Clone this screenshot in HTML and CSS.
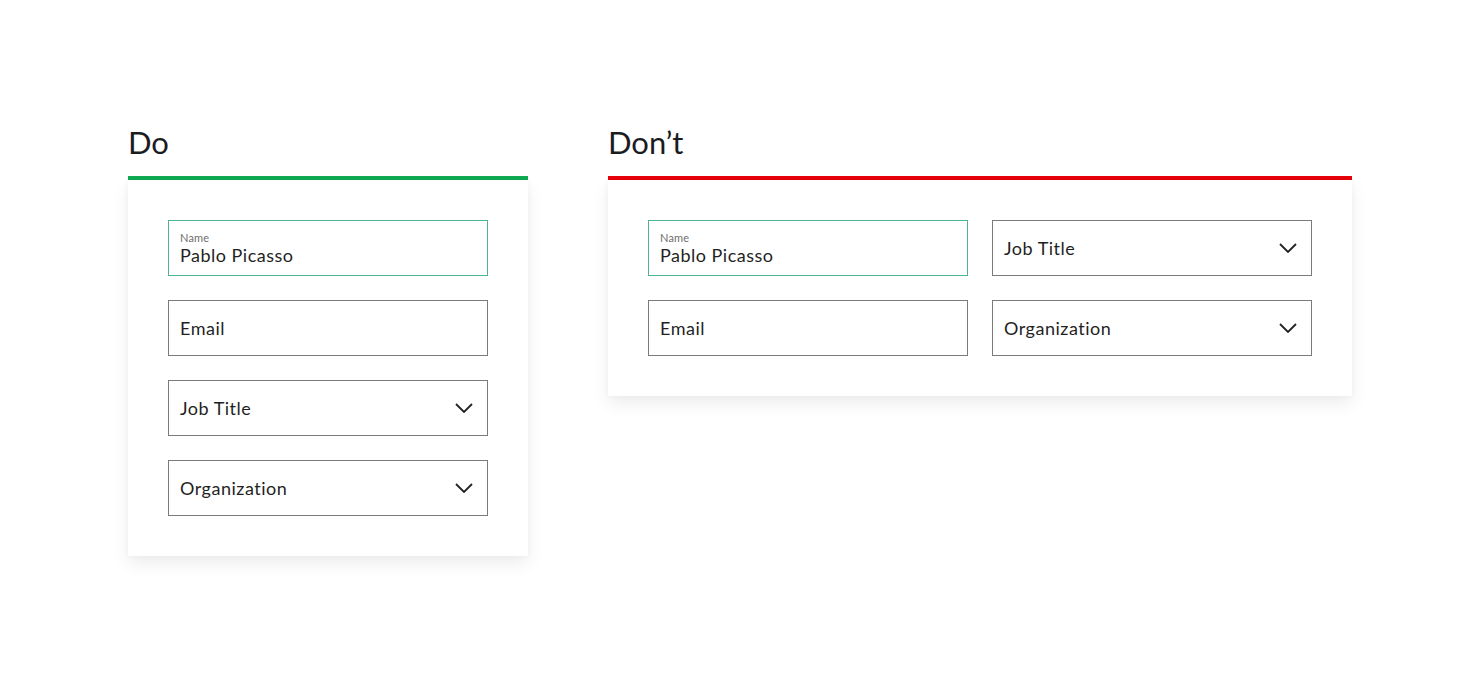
FILE: index.html
```html
<!DOCTYPE html>
<html>
<head>
<meta charset="utf-8">
<link rel="stylesheet" href="styles.css">
</head>
<body>
<div class="page">
  <section class="col col-do">
    <h2 class="title">Do</h2>
    <div class="bar bar-green"></div>
    <div class="card grid-1">
      <div class="field field-active">
        <span class="label">Name</span>
        <span class="value">Pablo Picasso</span>
      </div>
      <div class="field"><span class="placeholder">Email</span></div>
      <div class="field select"><span class="placeholder">Job Title</span>
        <svg class="chev" width="18" height="10" viewBox="0 0 18 10"><path d="M1 1l8 8 8-8" fill="none" stroke="#222" stroke-width="1.8"/></svg>
      </div>
      <div class="field select"><span class="placeholder">Organization</span>
        <svg class="chev" width="18" height="10" viewBox="0 0 18 10"><path d="M1 1l8 8 8-8" fill="none" stroke="#222" stroke-width="1.8"/></svg>
      </div>
    </div>
  </section>
  <section class="col col-dont">
    <h2 class="title">Don’t</h2>
    <div class="bar bar-red"></div>
    <div class="card grid-2">
      <div class="field field-active">
        <span class="label">Name</span>
        <span class="value">Pablo Picasso</span>
      </div>
      <div class="field select"><span class="placeholder">Job Title</span>
        <svg class="chev" width="18" height="10" viewBox="0 0 18 10"><path d="M1 1l8 8 8-8" fill="none" stroke="#222" stroke-width="1.8"/></svg>
      </div>
      <div class="field"><span class="placeholder">Email</span></div>
      <div class="field select"><span class="placeholder">Organization</span>
        <svg class="chev" width="18" height="10" viewBox="0 0 18 10"><path d="M1 1l8 8 8-8" fill="none" stroke="#222" stroke-width="1.8"/></svg>
      </div>
    </div>
  </section>
</div>
</body>
</html>
```
FILE: styles.css
```css
* { box-sizing: border-box; }
html, body { margin: 0; padding: 0; background: #fff; }
body { font-family: Lato, "Open Sans", sans-serif; color: #1f1f24; }
.page {
  display: flex;
  align-items: flex-start;
  gap: 80px;
  padding: 120px 0 0 128px;
  min-height: 678px;
}
.col-do { width: 400px; }
.col-dont { width: 744px; }
.title {
  margin: 0;
  font-weight: 400;
  font-size: 31px;
  line-height: 44px;
  height: 56px;
  color: #1b1c22;
}
.bar { height: 4px; }
.bar-green { background: #10ab52; }
.bar-red { background: #e8000b; }
.card {
  background: #fff;
  padding: 40px;
  box-shadow: 0 8px 16px rgba(0,0,0,0.07), 0 0 6px rgba(0,0,0,0.04);
  display: grid;
  gap: 24px;
}
.grid-1 { grid-template-columns: 320px; }
.grid-2 { grid-template-columns: 320px 320px; column-gap: 24px; }
.field {
  height: 56px;
  border: 1px solid #7a7a7a;
  padding: 0 11px;
  display: flex;
  align-items: center;
  font-size: 18px;
  letter-spacing: 0.5px;
  color: #1f1f24;
}
.field-active {
  border-color: #4fb394;
  flex-direction: column;
  align-items: flex-start;
  justify-content: center;
}
.label { font-size: 11px; color: #6e6e6e; line-height: 12px; margin-top: 2px; letter-spacing: 0.2px; }
.value { font-size: 18px; line-height: 22px; }
.select { justify-content: space-between; padding-right: 14px; }
.chev { display: block; }
```
